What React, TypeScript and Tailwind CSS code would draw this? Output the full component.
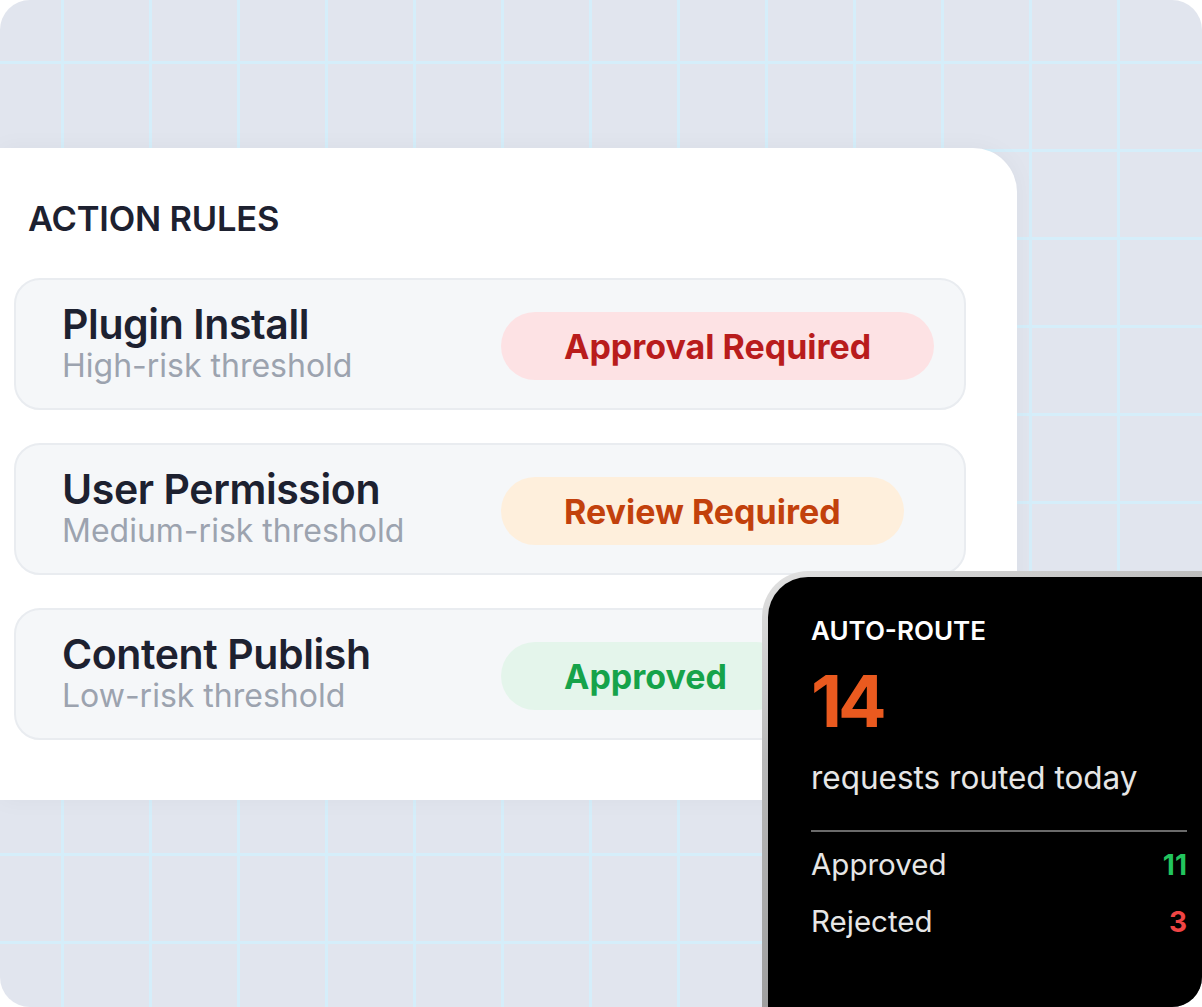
import React from "react";

type Rule = {
  name: string;
  threshold: string;
  status: string;
  badge: string;
};

const rules: Rule[] = [
  {
    name: "Plugin Install",
    threshold: "High-risk threshold",
    status: "Approval Required",
    badge: "bg-[#fde2e4] text-[#b91c1c]",
  },
  {
    name: "User Permission",
    threshold: "Medium-risk threshold",
    status: "Review Required",
    badge: "bg-[#feefdc] text-[#c2410c]",
  },
  {
    name: "Content Publish",
    threshold: "Low-risk threshold",
    status: "Approved",
    badge: "bg-[#e4f5eb] text-[#16a34a]",
  },
];

function RuleRow({ rule }: { rule: Rule }) {
  return (
    <div className="flex h-[132px] items-center rounded-[26px] border-2 border-[#e9ecf0] bg-[#f5f7f9] pl-[46px]">
      <div className="flex w-[439px] flex-col">
        <span className="text-[41px] font-semibold leading-[44px] tracking-[-0.4px] text-[#1d2130]">
          {rule.name}
        </span>
        <span className="text-[32px] leading-[40px] text-[#9ca3af]">{rule.threshold}</span>
      </div>
      <div
        className={`mt-[4px] flex h-[68px] items-center rounded-full px-[63px] text-[34px] font-bold ${rule.badge}`}
      >
        {rule.status}
      </div>
    </div>
  );
}

function StatLine({ label, value, tone }: { label: string; value: string; tone: string }) {
  return (
    <div className="flex items-center justify-between">
      <span className="text-[29.5px] leading-[57px] text-[#e6e6e6]">{label}</span>
      <span className={`text-[28px] font-bold ${tone}`}>{value}</span>
    </div>
  );
}

export default function App() {
  return (
    <div className="flex h-[1007px] w-[1202px] items-start bg-white">
      <div
        className="relative h-[1007px] w-[1202px] overflow-hidden rounded-[30px] bg-[#e1e5ee] bg-[linear-gradient(to_right,#d5eefa_3px,transparent_3px),linear-gradient(to_bottom,#d5eefa_3px,transparent_3px)] bg-[size:88px_88px] bg-[position:61px_61px] pt-[148px]"
        style={{ fontFamily: "Inter, 'Noto Sans', sans-serif" }}
      >
        {/* rules panel */}
        <div className="flex h-[652px] w-[1017px] flex-col rounded-tr-[44px] rounded-br-[44px] bg-white pl-[14px] pr-[51px] pt-[51px] shadow-[0_0_24px_rgba(15,23,42,0.04)]">
          <h2 className="ml-[14px] text-[34.5px] font-semibold leading-[40px] tracking-[-0.2px] text-[#1d2130]">
            ACTION RULES
          </h2>
          <div className="mt-[39px] flex flex-col gap-[33px]">
            {rules.map((r) => (
              <RuleRow key={r.name} rule={r} />
            ))}
          </div>
        </div>

        {/* auto-route summary */}
        <div className="absolute left-[762px] top-[571px] h-[460px] w-[480px] rounded-tl-[46px] bg-[linear-gradient(160deg,#e2e2e2_0%,#b8b8b8_30%,#8a8a8a_100%)] pl-[6px] pt-[6px]">
          <div className="h-full w-full rounded-tl-[40px] bg-black pl-[43px] pr-[57px] pt-[39px]">
            <div className="text-[26px] font-semibold leading-[30px] text-white">AUTO-ROUTE</div>
            <div className="mt-[19px] text-[72px] font-bold leading-[72px] tracking-[-4px] text-[#ea5a1f]">
              14
            </div>
            <div className="mt-[21px] text-[31.5px] leading-[40px] text-[#e6e6e6]">
              requests routed today
            </div>
            <div className="mt-[32px] h-[2px] w-[376px] bg-[#6a6a6a]" />
            <div className="mt-[4px] w-[376px]">
              <StatLine label="Approved" value="11" tone="text-[#22c55e]" />
              <StatLine label="Rejected" value="3" tone="text-[#ef4444]" />
            </div>
          </div>
        </div>
      </div>
    </div>
  );
}
